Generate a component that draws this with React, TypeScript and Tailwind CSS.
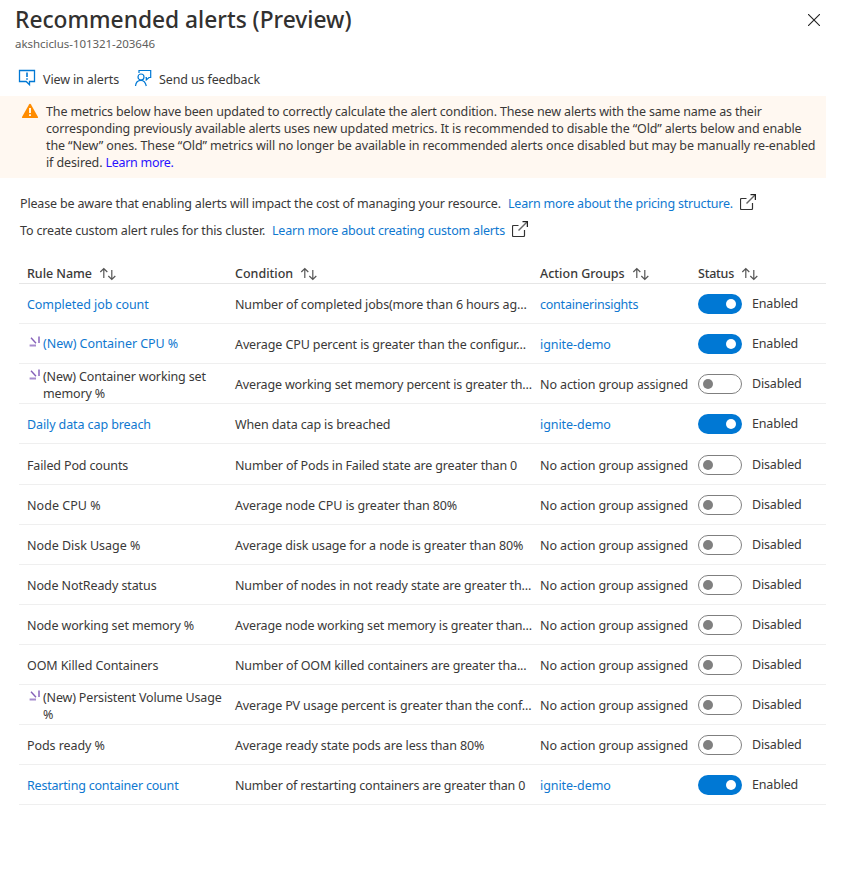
import React from "react";

type Row = {
  name: string;
  cond: string;
  nameCls: string;
  condCls: string;
  group?: string;
  groupCls?: string;
  on?: boolean;
  fresh?: boolean;
  link?: boolean;
};

const rows: Row[] = [
  { name: "Completed job count", nameCls: "pt-0.5 tracking-[-0.06px]", cond: "Number of completed jobs(more than 6 hours ag...", condCls: "tracking-[-0.14px]", group: "containerinsights", groupCls: "tracking-[-0.23px]", on: true, link: true },
  { name: "(New) Container CPU %", nameCls: "tracking-[-0.05px]", cond: "Average CPU percent is greater than the configur...", condCls: "tracking-[-0.11px]", group: "ignite-demo", groupCls: "tracking-[-0.06px]", on: true, fresh: true, link: true },
  { name: "(New) Container working set memory %", nameCls: "pt-0.5 tracking-[-0.14px]", cond: "Average working set memory percent is greater th...", condCls: "tracking-[-0.17px]", fresh: true },
  { name: "Daily data cap breach", nameCls: "pt-0.5 tracking-[-0.1px]", cond: "When data cap is breached", condCls: "tracking-[-0.12px]", group: "ignite-demo", groupCls: "tracking-[-0.06px]", on: true, link: true },
  { name: "Failed Pod counts", nameCls: "pt-0.5 tracking-[-0.14px]", cond: "Number of Pods in Failed state are greater than 0", condCls: "tracking-[-0.16px]" },
  { name: "Node CPU %", nameCls: "pt-0.5 tracking-[0.05px]", cond: "Average node CPU is greater than 80%", condCls: "tracking-[-0.12px]" },
  { name: "Node Disk Usage %", nameCls: "pt-0.5 tracking-[-0.03px]", cond: "Average disk usage for a node is greater than 80%", condCls: "tracking-[-0.13px]" },
  { name: "Node NotReady status", nameCls: "pt-0.5 tracking-[-0.1px]", cond: "Number of nodes in not ready state are greater th...", condCls: "tracking-[-0.14px]" },
  { name: "Node working set memory %", nameCls: "pt-0.5 tracking-[-0.12px]", cond: "Average node working set memory is greater than...", condCls: "tracking-[-0.17px]" },
  { name: "OOM Killed Containers", nameCls: "pt-0.5 tracking-[-0.1px]", cond: "Number of OOM killed containers are greater tha...", condCls: "tracking-[-0.15px]" },
  { name: "(New) Persistent Volume Usage %", nameCls: "pt-0.5 tracking-[-0.17px]", cond: "Average PV usage percent is greater than the conf...", condCls: "tracking-[-0.14px]", fresh: true },
  { name: "Pods ready %", nameCls: "pt-0.5 tracking-[-0.08px]", cond: "Average ready state pods are less than 80%", condCls: "tracking-[-0.13px]" },
  { name: "Restarting container count", nameCls: "pt-0.5 tracking-[-0.2px]", cond: "Number of restarting containers are greater than 0", condCls: "tracking-[-0.19px]", group: "ignite-demo", groupCls: "tracking-[-0.06px]", on: true, link: true },
];

const Sort = () => (
  <svg width="18" height="14" viewBox="0 0 18 14" className="ml-[7px]" fill="none" stroke="#555" strokeWidth="1.2">
    <path d="M4.8 11V1.6M1.3 5L4.8 1.5L8.3 5M12.8 3V12.4M9.3 9L12.8 12.5L16.3 9" />
  </svg>
);

const External = () => (
  <svg width="16" height="16" viewBox="0 0 16 16" className="-mt-[3px] shrink-0" fill="none">
    <path d="M6.5 4.5H1.5Q.5 4.5 .5 5.5V14.5Q.5 15.5 1.5 15.5H11.5Q12.5 15.5 12.5 14.5V9" stroke="#333" strokeWidth="1.2" />
    <path d="M6.5 9.5L15 1" stroke="#666" strokeWidth="1.5" />
    <path d="M10.5.6H15.4V6" stroke="#222" strokeWidth="1.3" />
  </svg>
);

const NewMark = () => (
  <svg width="16" height="14" viewBox="0 0 16 14" className="mt-[1px] shrink-0" fill="none">
    <path d="M4 1.8L9 7.2" stroke="#8560b8" strokeWidth="1.4" />
    <path d="M12 .5V7M2.6 9.5H9" stroke="#a68bce" strokeWidth="2" />
  </svg>
);

const Toggle = ({ on }: { on?: boolean }) =>
  on ? (
    <span className="flex h-5 w-11 items-center justify-end rounded-full bg-[#0078d4] pr-[6px]">
      <span className="h-[10px] w-[10px] rounded-full bg-white" />
    </span>
  ) : (
    <span className="flex h-5 w-11 items-center rounded-full border border-[#7f7f7f] pl-1">
      <span className="h-[10px] w-[10px] rounded-full bg-[#808080]" />
    </span>
  );

const heads = [
  { label: "Rule Name", cls: "tracking-[-0.05px]" },
  { label: "Condition", cls: "" },
  { label: "Action Groups", cls: "" },
  { label: "Status", cls: "tracking-[-0.25px]" },
];

export default function App() {
  return (
    <div className="h-[890px] w-[842px] overflow-hidden bg-white font-['Noto_Sans',sans-serif] text-[12.5px] leading-[17px] text-[#3a3938]">
      <header className="flex h-[64px] justify-between pl-[15px] pr-[22px]">
        <div>
          <h1 className="pt-1 text-[22.75px] font-medium leading-[32px] text-[#323130] whitespace-nowrap">Recommended alerts (Preview)</h1>
          <p className="text-[11.5px] leading-4 tracking-[-0.05px] text-[#605e5c]">akshciclus-101321-203646</p>
        </div>
        <svg width="12" height="12" viewBox="0 0 12 12" className="mt-[14px]" stroke="#222" strokeWidth="1.1">
          <path d="M0 0L12 12M12 0L0 12" />
        </svg>
      </header>
      <nav className="mb-[2px] flex h-[30px] items-center pl-[18px]">
        <svg width="18" height="18" viewBox="0 0 18 18" className="-mt-[3px]" fill="none" stroke="#0078d4" strokeWidth="1.3">
          <path d="M1.5 1.5H16.5V12.5H11.5V15.8L8.2 12.5H1.5Z" />
          <path d="M9 3.5V8M9 9.3V10.8" strokeWidth="1.6" />
        </svg>
        <span className="ml-[7px] w-[91px] tracking-[-0.12px] whitespace-nowrap">View in alerts</span>
        <svg width="18" height="18" viewBox="0 0 18 18" className="-mt-[3px]" fill="none" stroke="#0078d4" strokeWidth="1.2">
          <path d="M5 4V1.5H16.7V8.5H15L12.3 11V8.5H11.5" />
          <circle cx="7" cy="8" r="3" />
          <path d="M1.5 17Q2 11.3 7 11.3Q11 11.3 12.3 17" />
        </svg>
        <span className="ml-[7px] tracking-[-0.13px] whitespace-nowrap">Send us feedback</span>
      </nav>
      <section className="flex h-[82px] w-[826px] bg-[#fff8f1] pl-[21px] pt-[7px]">
        <svg width="18" height="16" viewBox="0 0 18 16" className="mr-[7px] shrink-0">
          <path d="M9 .8Q9.6.8 10 1.5L17 14Q17.4 15 16.5 15H1.5Q.6 15 1 14L8 1.5Q8.4.8 9 .8Z" fill="#ff8c00" />
          <path d="M9 5V10M9 11.3V13" stroke="#fff" strokeWidth="1.8" />
        </svg>
        <div className="whitespace-nowrap">
          <p className="tracking-[-0.15px]">The metrics below have been updated to correctly calculate the alert condition. These new alerts with the same name as their</p>
          <p className="tracking-[-0.14px]">corresponding previously available alerts uses new updated metrics. It is recommended to disable the “Old” alerts below and enable</p>
          <p className="tracking-[-0.115px]">the “New” ones. These “Old” metrics will no longer be available in recommended alerts once disabled but may be manually re-enabled</p>
          <p className="tracking-[-0.12px]">if desired. <a className="tracking-[-0.3px] text-[#2a12ff]">Learn more.</a></p>
        </div>
      </section>
      <section className="h-[84px] pl-5 pt-3 whitespace-nowrap">
        <p className="flex h-[27px] items-center">
          <span className="w-[488px] tracking-[-0.165px]">Please be aware that enabling alerts will impact the cost of managing your resource.</span>
          <a className="w-[232px] tracking-[-0.19px] text-[#0f78d0]">Learn more about the pricing structure.</a>
          <External />
        </p>
        <p className="flex h-[27px] items-center">
          <span className="w-[252px] tracking-[-0.15px]">To create custom alert rules for this cluster.</span>
          <a className="w-[240px] tracking-[-0.18px] text-[#0f78d0]">Learn more about creating custom alerts</a>
          <External />
        </p>
      </section>
      <main className="ml-[19px] w-[807px]">
        <div className="grid h-[22px] grid-cols-[208px_305px_158px_1fr] items-center border-b border-[#e6e6e6] pl-2 pt-0.5 font-medium">
          {heads.map((h) => (
            <div key={h.label} className="flex items-center whitespace-nowrap">
              <span className={h.cls}>{h.label}</span>
              <Sort />
            </div>
          ))}
        </div>
        {rows.map((r, i) => (
          <div
            key={r.name}
            className={`grid grid-cols-[208px_305px_158px_54px_1fr] items-center border-b border-[#efefef] pl-2 ${i === 4 ? "h-[41px] pt-px" : "h-[40px]"}`}
          >
            <div className={`flex pr-2.5 ${r.nameCls} ${r.link ? "text-[#0f78d0]" : ""}`}>
              {r.fresh && <NewMark />}
              <span>{r.name}</span>
            </div>
            <span className={`pt-0.5 whitespace-nowrap ${r.condCls}`}>{r.cond}</span>
            <span className={`pt-0.5 whitespace-nowrap ${r.group ? `text-[#0f78d0] ${r.groupCls}` : "tracking-[-0.11px]"}`}>
              {r.group ?? "No action group assigned"}
            </span>
            <Toggle on={r.on} />
            <span className="tracking-[-0.18px]">{r.on ? "Enabled" : "Disabled"}</span>
          </div>
        ))}
      </main>
    </div>
  );
}
